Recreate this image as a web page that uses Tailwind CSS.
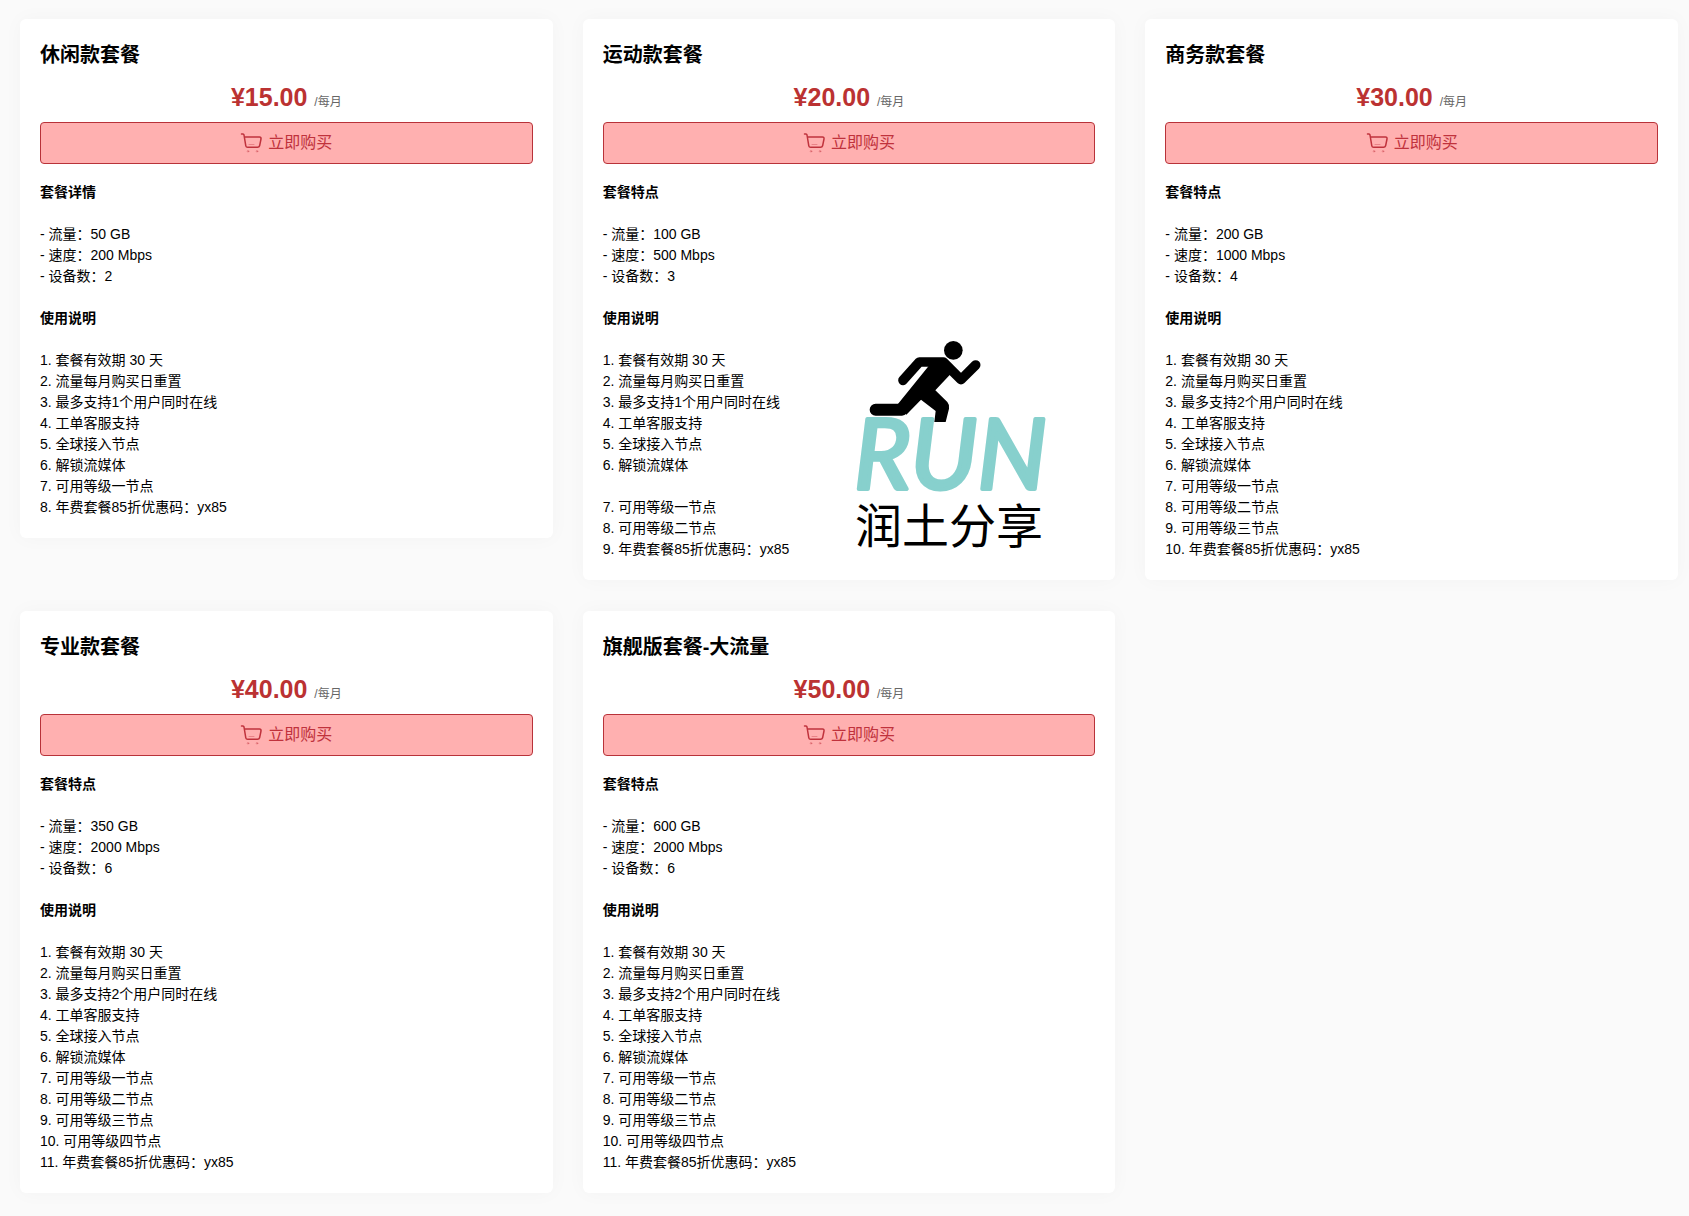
<!DOCTYPE html>
<html lang="zh-CN">
<head>
    <meta charset="UTF-8">
    <meta name="viewport" content="width=device-width, initial-scale=1.0">
    <title>套餐购买</title>
    <script src="https://cdn.jsdelivr.net/npm/@tailwindcss/browser@4"></script>
</head>
<body class="bg-[#fafafa] font-['Liberation_Sans','Noto_Sans_CJK_SC',sans-serif] text-black">
    <main id="plans" class="grid grid-cols-3 items-start gap-x-[30px] gap-y-[31px] pt-[19px] pr-[11px] pb-5 pl-5"></main>

    <!-- 品牌标志 -->
    <template id="brand-logo">
        <svg class="pointer-events-none absolute right-[45px] bottom-5 size-[230px]" viewBox="0 0 690 690" role="img" aria-label="RUN 润土分享">
            <circle cx="340" cy="61" r="28"/>
            <g fill="none" stroke="#000" stroke-linecap="round" stroke-linejoin="round">
                <path stroke-width="29" d="M189 151L238 96H310L363 149L407 105"/>
                <path stroke-width="36" d="M107 239H186L240 176"/>
            </g>
            <path d="M266 108L312 84L334 130L286 181L322 216Q329 224 327 236L317 276H283L287 243L243 209L199 254L172 224Z"/>
            <text x="42" y="477" font-family="Lato, sans-serif" font-size="293" font-style="italic" font-weight="400" fill="#87d0cd" stroke="#87d0cd" stroke-width="12" stroke-linejoin="round">RUN</text>
            <text x="45" y="640" font-family="'Noto Sans CJK SC', sans-serif" font-size="141">润土分享</text>
        </svg>
    </template>

    <script>
        const plans = [
            {
                name: '休闲款套餐', price: '15.00', heading: '套餐详情',
                traffic: '50 GB', speed: '200 Mbps', devices: 2,
                notes: ['1. 套餐有效期 30 天', '2. 流量每月购买日重置', '3. 最多支持1个用户同时在线', '4. 工单客服支持', '5. 全球接入节点', '6. 解锁流媒体', '7. 可用等级一节点', '8. 年费套餐85折优惠码：yx85'],
            },
            {
                name: '运动款套餐', price: '20.00', heading: '套餐特点', logo: true,
                traffic: '100 GB', speed: '500 Mbps', devices: 3,
                notes: ['1. 套餐有效期 30 天', '2. 流量每月购买日重置', '3. 最多支持1个用户同时在线', '4. 工单客服支持', '5. 全球接入节点', '6. 解锁流媒体', '', '7. 可用等级一节点', '8. 可用等级二节点', '9. 年费套餐85折优惠码：yx85'],
            },
            {
                name: '商务款套餐', price: '30.00', heading: '套餐特点',
                traffic: '200 GB', speed: '1000 Mbps', devices: 4,
                notes: ['1. 套餐有效期 30 天', '2. 流量每月购买日重置', '3. 最多支持2个用户同时在线', '4. 工单客服支持', '5. 全球接入节点', '6. 解锁流媒体', '7. 可用等级一节点', '8. 可用等级二节点', '9. 可用等级三节点', '10. 年费套餐85折优惠码：yx85'],
            },
            {
                name: '专业款套餐', price: '40.00', heading: '套餐特点',
                traffic: '350 GB', speed: '2000 Mbps', devices: 6,
                notes: ['1. 套餐有效期 30 天', '2. 流量每月购买日重置', '3. 最多支持2个用户同时在线', '4. 工单客服支持', '5. 全球接入节点', '6. 解锁流媒体', '7. 可用等级一节点', '8. 可用等级二节点', '9. 可用等级三节点', '10. 可用等级四节点', '11. 年费套餐85折优惠码：yx85'],
            },
            {
                name: '旗舰版套餐-大流量', price: '50.00', heading: '套餐特点',
                traffic: '600 GB', speed: '2000 Mbps', devices: 6,
                notes: ['1. 套餐有效期 30 天', '2. 流量每月购买日重置', '3. 最多支持2个用户同时在线', '4. 工单客服支持', '5. 全球接入节点', '6. 解锁流媒体', '7. 可用等级一节点', '8. 可用等级二节点', '9. 可用等级三节点', '10. 可用等级四节点', '11. 年费套餐85折优惠码：yx85'],
            },
        ];

        const logo = document.getElementById('brand-logo').innerHTML;

        // 渲染套餐卡片
        document.getElementById('plans').innerHTML = plans.map(plan => `
            <section class="relative rounded-md bg-white p-5 shadow-[0_0_20px_rgba(0,0,0,0.03)]">
                <h2 class="text-xl leading-8 font-bold">${plan.name}</h2>
                <p class="mt-2 text-center text-[25px] leading-9 font-bold text-[#bb3232]">¥${plan.price} <span class="text-xs font-normal text-[#666]">/每月</span></p>
                <button type="button" class="mt-[7px] flex h-[42px] w-full items-center justify-center gap-1.5 rounded border border-[#b83239] bg-[#ffb0b0] text-base text-[#c0323c]">
                    <svg class="h-5 w-[22px]" viewBox="0 0 22 20" fill="none" stroke="currentColor" stroke-linecap="round" stroke-linejoin="round" aria-hidden="true">
                        <path stroke-width="1.5" d="M1.5 1H3Q3.8 1 4 2L5.8 12.8Q6.1 14.3 7.6 14.3H17.5Q19.2 14.3 19.6 12.8L21 6Q21.3 4 19.5 4H4.5"/>
                        <path stroke-width="0.7" opacity="0.5" d="M9 11.5H14"/>
                        <circle cx="8" cy="18.3" r="0.8" stroke-width="0.7" opacity="0.5"/>
                        <circle cx="17" cy="18.3" r="0.8" stroke-width="0.7" opacity="0.5"/>
                    </svg>
                    立即购买
                </button>
                <div class="mt-[18px] text-sm leading-[21px]">
                    <h3 class="font-bold">${plan.heading}</h3>
                    <ul class="my-[21px]">
                        <li>- 流量：${plan.traffic}</li>
                        <li>- 速度：${plan.speed}</li>
                        <li>- 设备数：${plan.devices}</li>
                    </ul>
                    <h3 class="font-bold">使用说明</h3>
                    <ul class="mt-[21px]">
                        ${plan.notes.map(note => `<li class="min-h-[21px]">${note}</li>`).join('')}
                    </ul>
                </div>
                ${plan.logo ? logo : ''}
            </section>
        `).join('');
    </script>
</body>
</html>
